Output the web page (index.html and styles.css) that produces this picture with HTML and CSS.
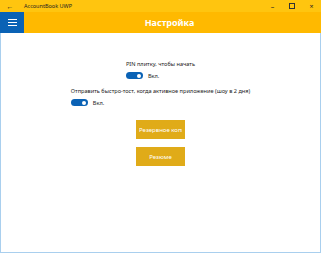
FILE: index.html
```html
<!DOCTYPE html>
<html lang="ru">
<head>
    <meta charset="UTF-8">
    <title>AccountBook UWP</title>
    <link rel="stylesheet" href="styles.css">
</head>
<body>
    <div class="window">
        <!-- Title bar -->
        <div class="titlebar">
            <span class="back">&#8592;</span>
            <span class="app-name">AccountBook UWP</span>
            <div class="controls">
                <span class="ctl">&#8211;</span>
                <span class="ctl box"></span>
                <span class="ctl">&#215;</span>
            </div>
        </div>

        <!-- Page header -->
        <div class="header">
            <div class="menu-btn">
                <svg width="9" height="7" viewBox="0 0 9 7">
                    <rect x="0" y="0" width="9" height="1" fill="#fff"/>
                    <rect x="0" y="3" width="9" height="1" fill="#fff"/>
                    <rect x="0" y="6" width="9" height="1" fill="#fff"/>
                </svg>
            </div>
            <div class="title">Настройка</div>
        </div>

        <!-- Settings -->
        <div class="content">
            <div class="setting">
                <div class="label">PIN плитку, чтобы начать</div>
                <div class="toggle-row">
                    <span class="toggle"><span class="knob"></span></span>
                    <span class="state">Вкл.</span>
                </div>
            </div>

            <div class="setting">
                <div class="label">Отправить быстро-тост, когда активное приложение (шоу в 2 дня)</div>
                <div class="toggle-row">
                    <span class="toggle"><span class="knob"></span></span>
                    <span class="state">Вкл.</span>
                </div>
            </div>

            <div class="buttons">
                <button class="action left"><span class="clip">Резервное копирование</span></button>
                <button class="action">Резюме</button>
            </div>
        </div>
    </div>
</body>
</html>
```

FILE: styles.css
```css
/* Reset */
body, html {
    margin: 0;
    padding: 0;
    width: 321px;
    height: 253px;
    overflow: hidden;
    font-family: 'Noto Sans', sans-serif;
    background: #fff;
}

.window {
    width: 321px;
    height: 253px;
    display: flex;
    flex-direction: column;
}

/* Title bar */
.titlebar {
    height: 12px;
    background-color: #ffc50f;
    display: flex;
    align-items: center;
    color: #222;
    font-size: 5.5px;
}

.back {
    width: 20px;
    text-align: center;
    font-size: 7px;
    margin-right: 4px;
}

.app-name {
    flex: 1;
}

.controls {
    display: flex;
    align-items: center;
}

.ctl {
    width: 19px;
    text-align: center;
    font-size: 7px;
}

.ctl.box {
    width: 4px;
    height: 4px;
    border: 1px solid #333;
    margin: 0 7px;
}

/* Header */
.header {
    height: 21px;
    background-color: #ffb900;
    display: flex;
}

.menu-btn {
    width: 24px;
    background-color: #0a62b5;
    display: flex;
    justify-content: center;
    align-items: center;
}

.title {
    flex: 1;
    text-align: center;
    line-height: 21px;
    color: #fff;
    font-weight: bold;
    font-size: 9px;
    padding-right: 6px;
}

/* Content area */
.content {
    flex: 1;
    border: 1px solid #a9cfee;
    border-top: none;
    padding-top: 27px;
    display: flex;
    flex-direction: column;
    align-items: center;
    color: #222;
    font-size: 5.6px;
}

.setting {
    display: flex;
    flex-direction: column;
    margin-bottom: 7px;
}

.label {
    line-height: 9px;
}

.toggle-row {
    display: flex;
    align-items: center;
    height: 9px;
    margin-top: 2px;
}

.toggle {
    width: 17px;
    height: 7px;
    border-radius: 4px;
    background-color: #0a62b5;
    display: flex;
    align-items: center;
    justify-content: flex-end;
    margin-right: 5px;
}

.knob {
    width: 4px;
    height: 4px;
    border-radius: 50%;
    background: #fff;
    margin-right: 1.5px;
}

/* Buttons */
.buttons {
    display: flex;
    flex-direction: column;
    gap: 8px;
    margin-top: 6px;
}

.action {
    width: 49px;
    height: 19px;
    border: none;
    padding: 0 3px;
    background-color: #e0ab18;
    color: #fff;
    font-family: 'Noto Sans', sans-serif;
    font-weight: normal;
    font-size: 6px;
    white-space: nowrap;
    overflow: hidden;
}

.action.left {
    text-align: left;
}

.clip {
    display: block;
    overflow: hidden;
}
```
